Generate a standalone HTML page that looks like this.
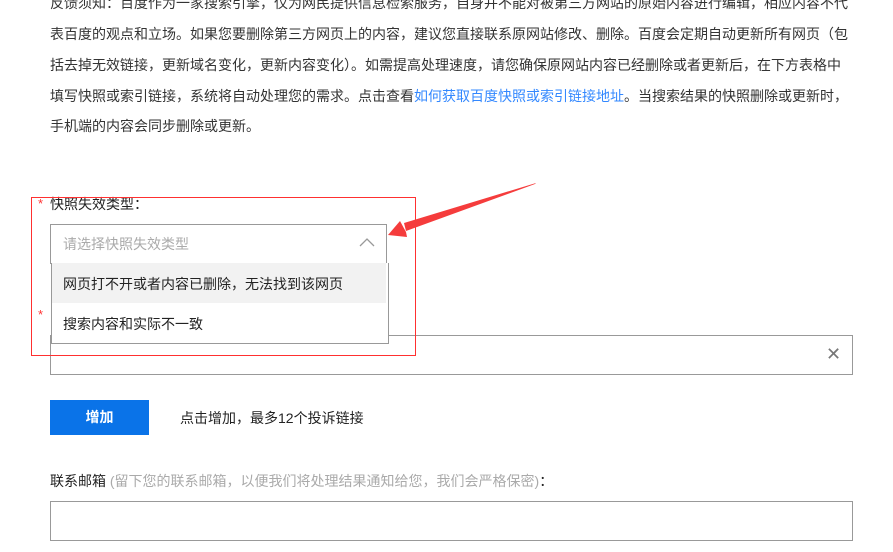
<!DOCTYPE html>
<html><head><meta charset="utf-8"><style>
body{margin:0;width:893px;height:552px;overflow:hidden;background:#fff;font-family:"Liberation Sans","Noto Sans CJK SC",sans-serif;font-size:14px;color:#333;position:relative}
.a{position:absolute;white-space:nowrap}
.l{left:50px;height:20px;line-height:20px}
a{color:#3388ff;text-decoration:none}
.r{position:absolute;background:#ff3030}
</style></head><body>
<div class="a l" style="top:-7px">反馈须知：百度作为一家搜索引擎，仅为网民提供信息检索服务，自身并不能对被第三方网站的原始内容进行编辑，相应内容不代</div>
<div class="a l" style="top:24px">表百度的观点和立场。如果您要删除第三方网页上的内容，建议您直接联系原网站修改、删除。百度会定期自动更新所有网页（包</div>
<div class="a l" style="top:55px">括去掉无效链接，更新域名变化，更新内容变化）。如需提高处理速度，请您确保原网站内容已经删除或者更新后，在下方表格中</div>
<div class="a l" style="top:86px">填写快照或索引链接，系统将自动处理您的需求。点击查看<a>如何获取百度快照或索引链接地址</a>。当搜索结果的快照删除或更新时，</div>
<div class="a l" style="top:116px">手机端的内容会同步删除或更新。</div>

<div class="a" style="left:38px;top:196px;color:#f33;font-size:13px">*</div>
<div class="a" style="left:50px;top:194px;line-height:20px;color:#222">快照失效类型：</div>
<div class="a" style="left:38px;top:307px;color:#f33;font-size:13px">*</div>

<div class="a" style="left:50px;top:335px;width:801px;height:38px;border:1px solid #999"></div>
<div class="a" style="left:826px;top:344px;font-size:18px;color:#777;line-height:20px">✕</div>

<div class="a" style="left:50px;top:224px;width:335px;height:38px;border:1px solid #999;background:#fff"></div>
<div class="a" style="left:63px;top:234px;color:#aaa;line-height:20px">请选择快照失效类型</div>
<svg class="a" style="left:358px;top:237px" width="18" height="12"><path d="M2 9 L9 2 L16 9" fill="none" stroke="#999" stroke-width="1.3"/></svg>

<div class="a" style="left:51px;top:263px;width:336px;height:80px;border:1px solid #999;border-top:none;background:#fff"></div>
<div class="a" style="left:52px;top:263px;width:334px;height:40px;background:#f2f2f2"></div>
<div class="a" style="left:63px;top:274px;color:#222;line-height:20px">网页打不开或者内容已删除，无法找到该网页</div>
<div class="a" style="left:63px;top:314px;color:#222;line-height:20px">搜索内容和实际不一致</div>

<div class="r" style="left:31px;top:197px;width:385px;height:1px"></div>
<div class="r" style="left:31px;top:355px;width:385px;height:1px"></div>
<div class="r" style="left:31px;top:197px;width:1px;height:159px"></div>
<div class="r" style="left:415px;top:197px;width:1px;height:159px"></div>
<svg class="a" style="left:0;top:0" width="893" height="552"><polygon points="536,183 404,223 406,231 535,184" fill="rgb(245,60,60)"/><polygon points="388,235 400,221 406,232 407,237" fill="rgb(245,60,60)"/></svg>

<div class="a" style="left:50px;top:400px;width:99px;height:35px;background:#0a73e8;color:#fff;text-align:center;line-height:35px;font-weight:bold">增加</div>
<div class="a" style="left:180px;top:408px;color:#222;line-height:20px">点击增加，最多12个投诉链接</div>

<div class="a" style="left:50px;top:471px;color:#222;line-height:20px">联系邮箱 <span style="color:#aaa">(留下您的联系邮箱，以便我们将处理结果通知给您，我们会严格保密)</span>：</div>
<div class="a" style="left:50px;top:501px;width:801px;height:38px;border:1px solid #999"></div>
</body></html>
